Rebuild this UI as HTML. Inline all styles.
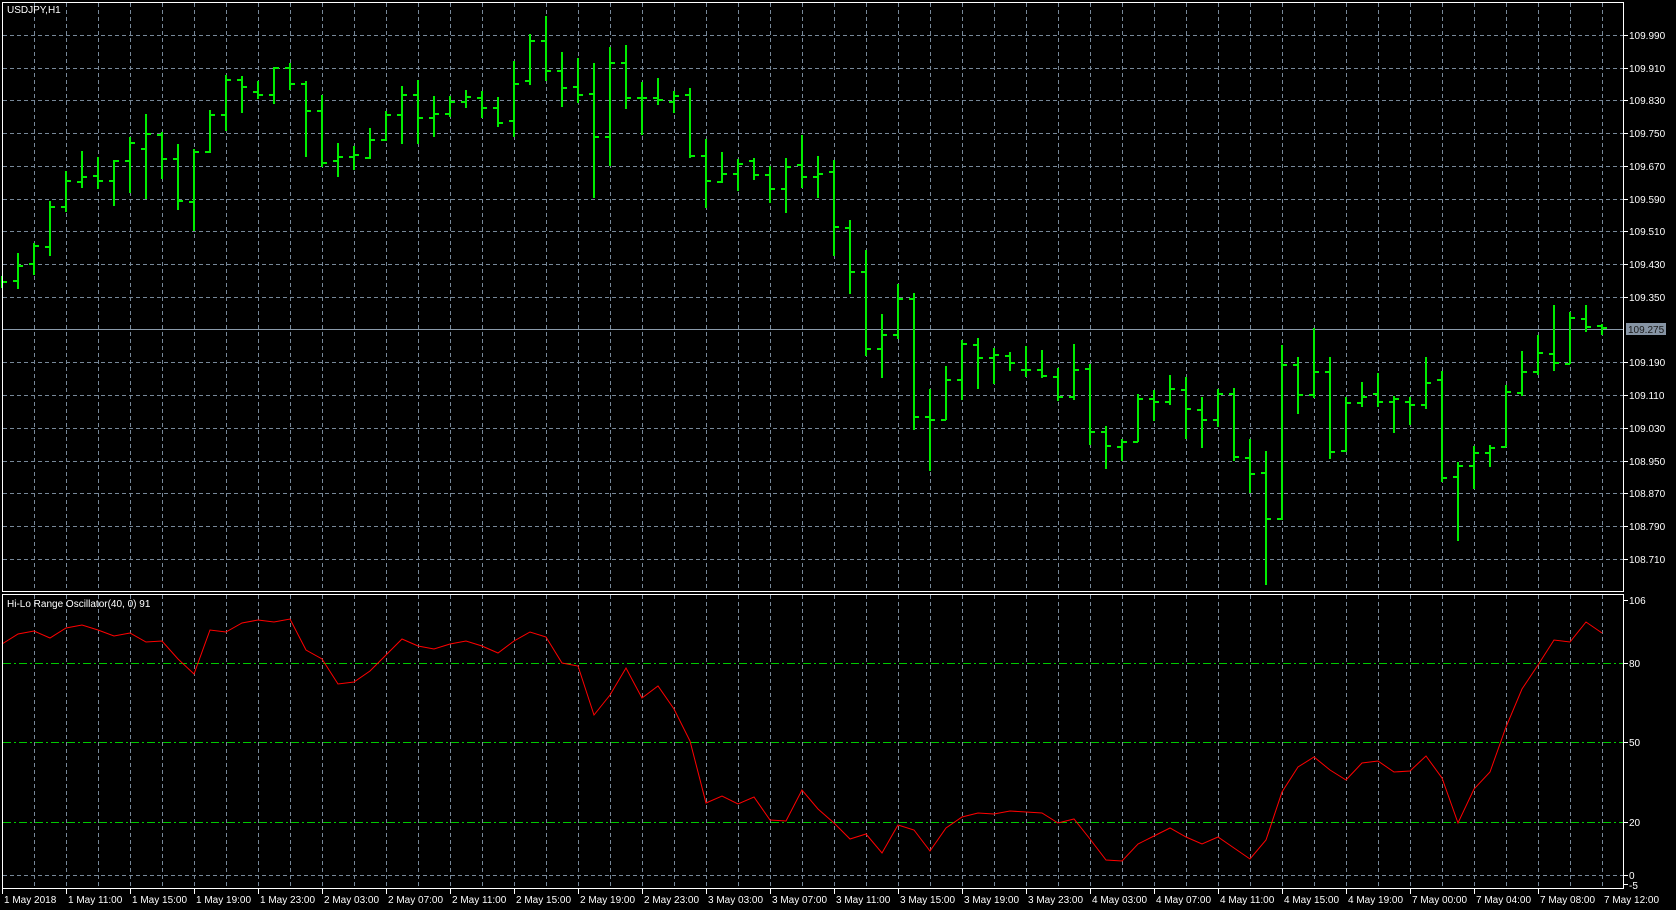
<!DOCTYPE html>
<html><head><meta charset="utf-8"><style>
html,body{margin:0;padding:0;background:#000;width:1676px;height:910px;overflow:hidden}
svg{display:block}
text{font-family:"Liberation Sans",sans-serif;font-size:10px;fill:#fff}
</style></head><body>
<svg width="1676" height="910" viewBox="0 0 1676 910" xmlns="http://www.w3.org/2000/svg">
<rect width="1676" height="910" fill="#000"/>
<g stroke="#778899" stroke-width="1" stroke-dasharray="4,3">
<path d="M34.5 3V591M66.5 3V591M98.5 3V591M130.5 3V591M162.5 3V591M194.5 3V591M226.5 3V591M258.5 3V591M290.5 3V591M322.5 3V591M354.5 3V591M386.5 3V591M418.5 3V591M450.5 3V591M482.5 3V591M514.5 3V591M546.5 3V591M578.5 3V591M610.5 3V591M642.5 3V591M674.5 3V591M706.5 3V591M738.5 3V591M770.5 3V591M802.5 3V591M834.5 3V591M866.5 3V591M898.5 3V591M930.5 3V591M962.5 3V591M994.5 3V591M1026.5 3V591M1058.5 3V591M1090.5 3V591M1122.5 3V591M1154.5 3V591M1186.5 3V591M1218.5 3V591M1250.5 3V591M1282.5 3V591M1314.5 3V591M1346.5 3V591M1378.5 3V591M1410.5 3V591M1442.5 3V591M1474.5 3V591M1506.5 3V591M1538.5 3V591M1570.5 3V591M1602.5 3V591"/>
<path d="M34.5 595V888M66.5 595V888M98.5 595V888M130.5 595V888M162.5 595V888M194.5 595V888M226.5 595V888M258.5 595V888M290.5 595V888M322.5 595V888M354.5 595V888M386.5 595V888M418.5 595V888M450.5 595V888M482.5 595V888M514.5 595V888M546.5 595V888M578.5 595V888M610.5 595V888M642.5 595V888M674.5 595V888M706.5 595V888M738.5 595V888M770.5 595V888M802.5 595V888M834.5 595V888M866.5 595V888M898.5 595V888M930.5 595V888M962.5 595V888M994.5 595V888M1026.5 595V888M1058.5 595V888M1090.5 595V888M1122.5 595V888M1154.5 595V888M1186.5 595V888M1218.5 595V888M1250.5 595V888M1282.5 595V888M1314.5 595V888M1346.5 595V888M1378.5 595V888M1410.5 595V888M1442.5 595V888M1474.5 595V888M1506.5 595V888M1538.5 595V888M1570.5 595V888M1602.5 595V888"/>
<path d="M3 35.5H1623M3 68.5H1623M3 100.5H1623M3 133.5H1623M3 166.5H1623M3 199.5H1623M3 231.5H1623M3 264.5H1623M3 297.5H1623M3 362.5H1623M3 395.5H1623M3 428.5H1623M3 461.5H1623M3 493.5H1623M3 526.5H1623M3 559.5H1623M3 875.5H1623"/>
</g>
<path d="M3 329.5H1623" stroke="#8a9aaa" stroke-width="1"/>
<g stroke="#00c800" stroke-width="1" stroke-dasharray="8,3,2,3">
<path d="M3 663.5H1623M3 742.5H1623M3 822.5H1623"/>
</g>
<g stroke="#00ee00" stroke-width="2" fill="none">
<path d="M2 276V288M2 282H7"/>
<path d="M18 253V289M13 281H18M18 266H23"/>
<path d="M34 243V275M29 264H34M34 246H39"/>
<path d="M50 201V256M45 247H50M50 207H55"/>
<path d="M66 171V212M61 207H66M66 181H71"/>
<path d="M82 151V188M77 182H82M82 177H87"/>
<path d="M98 157V189M93 176H98M98 181H103"/>
<path d="M114 160V206M109 181H114M114 161H119"/>
<path d="M130 137V193M125 161H130M130 143H135"/>
<path d="M146 114V199M141 149H146M146 134H151"/>
<path d="M162 132V179M157 135H162M162 159H167"/>
<path d="M178 144V210M173 159H178M178 201H183"/>
<path d="M194 149V231M189 202H194M194 152H199"/>
<path d="M210 110V153M205 152H210M210 115H215"/>
<path d="M226 75V131M221 115H226M226 80H231"/>
<path d="M242 76V113M237 80H242M242 87H247"/>
<path d="M258 81V99M253 92H258M258 95H263"/>
<path d="M274 67V104M269 95H274M274 68H279"/>
<path d="M290 63V90M285 68H290M290 84H295"/>
<path d="M306 81V157M301 84H306M306 111H311"/>
<path d="M322 95V167M317 111H322M322 163H327"/>
<path d="M338 143V177M333 161H338M338 157H343"/>
<path d="M354 146V170M349 157H354M354 155H359"/>
<path d="M370 128V159M365 158H370M370 140H375"/>
<path d="M386 111V141M381 140H386M386 115H391"/>
<path d="M402 86V144M397 115H402M402 95H407"/>
<path d="M418 80V144M413 95H418M418 118H423"/>
<path d="M434 96V137M429 118H434M434 114H439"/>
<path d="M450 96V117M445 114H450M450 102H455"/>
<path d="M466 90V108M461 102H466M466 97H471"/>
<path d="M482 91V118M477 98H482M482 108H487"/>
<path d="M498 97V127M493 108H498M498 123H503"/>
<path d="M514 61V137M509 121H514M514 84H519"/>
<path d="M530 34V85M525 81H530M530 41H535"/>
<path d="M546 16V81M541 41H546M546 71H551"/>
<path d="M562 52V107M557 71H562M562 88H567"/>
<path d="M578 58V103M573 87H578M578 95H583"/>
<path d="M594 63V198M589 94H594M594 137H599"/>
<path d="M610 47V166M605 137H610M610 63H615"/>
<path d="M626 45V109M621 63H626M626 98H631"/>
<path d="M642 82V135M637 98H642M642 98H647"/>
<path d="M658 78V105M653 98H658M658 100H663"/>
<path d="M674 91V113M669 102H674M674 96H679"/>
<path d="M690 88V158M685 95H690M690 156H695"/>
<path d="M706 139V208M701 156H706M706 181H711"/>
<path d="M722 152V183M717 182H722M722 174H727"/>
<path d="M738 159V191M733 174H738M738 164H743"/>
<path d="M754 158V180M749 161H754M754 175H759"/>
<path d="M770 166V203M765 175H770M770 189H775"/>
<path d="M786 158V213M781 189H786M786 167H791"/>
<path d="M802 135V188M797 165H802M802 177H807"/>
<path d="M818 156V198M813 177H818M818 174H823"/>
<path d="M834 160V256M829 172H834M834 227H839"/>
<path d="M850 220V294M845 228H850M850 272H855"/>
<path d="M866 250V356M861 272H866M866 349H871"/>
<path d="M882 314V378M877 349H882M882 335H887"/>
<path d="M898 284V339M893 335H898M898 299H903"/>
<path d="M914 293V430M909 299H914M914 417H919"/>
<path d="M930 389V471M925 417H930M930 420H935"/>
<path d="M946 366V420M941 420H946M946 380H951"/>
<path d="M962 340V400M957 380H962M962 344H967"/>
<path d="M978 338V389M973 345H978M978 358H983"/>
<path d="M994 348V384M989 358H994M994 355H999"/>
<path d="M1010 352V371M1005 356H1010M1010 363H1015"/>
<path d="M1026 346V377M1021 370H1026M1026 370H1031"/>
<path d="M1042 350V378M1037 370H1042M1042 376H1047"/>
<path d="M1058 368V401M1053 377H1058M1058 397H1063"/>
<path d="M1074 344V400M1069 397H1074M1074 370H1079"/>
<path d="M1090 364V445M1085 369H1090M1090 432H1095"/>
<path d="M1106 426V469M1101 432H1106M1106 446H1111"/>
<path d="M1122 439V461M1117 447H1122M1122 442H1127"/>
<path d="M1138 394V442M1133 442H1138M1138 399H1143"/>
<path d="M1154 390V421M1149 399H1154M1154 402H1159"/>
<path d="M1170 375V405M1165 402H1170M1170 389H1175"/>
<path d="M1186 377V439M1181 390H1186M1186 409H1191"/>
<path d="M1202 397V448M1197 410H1202M1202 420H1207"/>
<path d="M1218 389V427M1213 420H1218M1218 394H1223"/>
<path d="M1234 388V461M1229 394H1234M1234 457H1239"/>
<path d="M1250 439V493M1245 458H1250M1250 474H1255"/>
<path d="M1266 451V585M1261 473H1266M1266 519H1271"/>
<path d="M1282 345V520M1277 519H1282M1282 365H1287"/>
<path d="M1298 357V414M1293 365H1298M1298 395H1303"/>
<path d="M1314 328V398M1309 395H1314M1314 372H1319"/>
<path d="M1330 357V459M1325 372H1330M1330 452H1335"/>
<path d="M1346 397V452M1341 451H1346M1346 403H1351"/>
<path d="M1362 382V407M1357 403H1362M1362 397H1367"/>
<path d="M1378 373V407M1373 394H1378M1378 402H1383"/>
<path d="M1394 396V433M1389 402H1394M1394 399H1399"/>
<path d="M1410 397V425M1405 402H1410M1410 405H1415"/>
<path d="M1426 357V409M1421 405H1426M1426 383H1431"/>
<path d="M1442 371V482M1437 380H1442M1442 478H1447"/>
<path d="M1458 462V541M1453 477H1458M1458 466H1463"/>
<path d="M1474 446V489M1469 466H1474M1474 453H1479"/>
<path d="M1490 445V467M1485 453H1490M1490 448H1495"/>
<path d="M1506 385V447M1501 447H1506M1506 392H1511"/>
<path d="M1522 351V396M1517 393H1522M1522 372H1527"/>
<path d="M1538 335V375M1533 372H1538M1538 353H1543"/>
<path d="M1554 305V371M1549 354H1554M1554 363H1559"/>
<path d="M1570 312V364M1565 364H1570M1570 318H1575"/>
<path d="M1586 305V332M1581 319H1586M1586 327H1591"/>
<path d="M1602 324V335M1597 326H1602M1602 328H1607"/>
</g>
<polyline fill="none" stroke="#ff0000" stroke-width="1" points="2,644 18,634 34,631 50,638 66,628 82,625 98,630 114,636 130,633 146,642 162,641 178,659 194,674 210,630 226,632 242,623 258,620 274,622 290,619 306,650 322,659 338,684 354,682 370,671 386,655 402,639 418,646 434,649 450,644 466,641 482,646 498,653 514,641 530,632 546,637 562,663 578,666 594,715 610,695 626,668 642,698 658,686 674,709 690,741 706,803 722,796 738,804 754,797 770,820 786,821 802,790 818,809 834,823 850,839 866,834 882,853 898,825 914,830 930,851 946,828 962,817 978,813 994,814 1010,811 1026,812 1042,813 1058,823 1074,819 1090,839 1106,860 1122,861 1138,844 1154,836 1170,828 1186,837 1202,844 1218,837 1234,848 1250,859 1266,840 1282,792 1298,767 1314,757 1330,770 1346,780 1362,763 1378,761 1394,772 1410,771 1426,756 1442,778 1458,823 1474,789 1490,772 1506,727 1522,689 1538,665 1554,640 1570,642 1586,622 1602,633"/>
<g stroke="#fff" stroke-width="1" fill="none">
<path d="M2.5 2.5H1623.5V591.5H2.5Z"/>
<path d="M2.5 594.5H1623.5V888.5H2.5Z"/>
<path d="M1623 35.5h5M1623 68.5h5M1623 100.5h5M1623 133.5h5M1623 166.5h5M1623 199.5h5M1623 231.5h5M1623 264.5h5M1623 297.5h5M1623 362.5h5M1623 395.5h5M1623 428.5h5M1623 461.5h5M1623 493.5h5M1623 526.5h5M1623 559.5h5"/>
<path d="M1623 600.5h5M1623 663.5h5M1623 742.5h5M1623 822.5h5M1623 875.5h5M1623 884.5h5"/>
<path d="M2.5 888V894M66.5 888V894M130.5 888V894M194.5 888V894M258.5 888V894M322.5 888V894M386.5 888V894M450.5 888V894M514.5 888V894M578.5 888V894M642.5 888V894M706.5 888V894M770.5 888V894M834.5 888V894M898.5 888V894M962.5 888V894M1026.5 888V894M1090.5 888V894M1154.5 888V894M1218.5 888V894M1282.5 888V894M1346.5 888V894M1410.5 888V894M1474.5 888V894M1538.5 888V894"/>
</g>
<text x="7" y="13">USDJPY,H1</text>
<text x="7" y="607">Hi-Lo Range Oscillator(40, 0) 91</text>
<g>
<text x="1629" y="39">109.990</text>
<text x="1629" y="72">109.910</text>
<text x="1629" y="104">109.830</text>
<text x="1629" y="137">109.750</text>
<text x="1629" y="170">109.670</text>
<text x="1629" y="203">109.590</text>
<text x="1629" y="235">109.510</text>
<text x="1629" y="268">109.430</text>
<text x="1629" y="301">109.350</text>
<text x="1629" y="366">109.190</text>
<text x="1629" y="399">109.110</text>
<text x="1629" y="432">109.030</text>
<text x="1629" y="465">108.950</text>
<text x="1629" y="497">108.870</text>
<text x="1629" y="530">108.790</text>
<text x="1629" y="563">108.710</text>
</g>
<rect x="1626" y="323" width="40" height="12" fill="#8694a4"/>
<text x="1628" y="333" style="fill:#1a1a1a">109.275</text>
<text x="1629" y="604">106</text>
<text x="1629" y="667">80</text>
<text x="1629" y="746">50</text>
<text x="1629" y="826">20</text>
<text x="1629" y="879">0</text>
<text x="1629" y="889">-5</text>
<g>
<text x="4" y="903">1 May 2018</text>
<text x="68" y="903">1 May 11:00</text>
<text x="132" y="903">1 May 15:00</text>
<text x="196" y="903">1 May 19:00</text>
<text x="260" y="903">1 May 23:00</text>
<text x="324" y="903">2 May 03:00</text>
<text x="388" y="903">2 May 07:00</text>
<text x="452" y="903">2 May 11:00</text>
<text x="516" y="903">2 May 15:00</text>
<text x="580" y="903">2 May 19:00</text>
<text x="644" y="903">2 May 23:00</text>
<text x="708" y="903">3 May 03:00</text>
<text x="772" y="903">3 May 07:00</text>
<text x="836" y="903">3 May 11:00</text>
<text x="900" y="903">3 May 15:00</text>
<text x="964" y="903">3 May 19:00</text>
<text x="1028" y="903">3 May 23:00</text>
<text x="1092" y="903">4 May 03:00</text>
<text x="1156" y="903">4 May 07:00</text>
<text x="1220" y="903">4 May 11:00</text>
<text x="1284" y="903">4 May 15:00</text>
<text x="1348" y="903">4 May 19:00</text>
<text x="1412" y="903">7 May 00:00</text>
<text x="1476" y="903">7 May 04:00</text>
<text x="1540" y="903">7 May 08:00</text>
<text x="1604" y="903">7 May 12:00</text>
</g>
</svg>
</body></html>
